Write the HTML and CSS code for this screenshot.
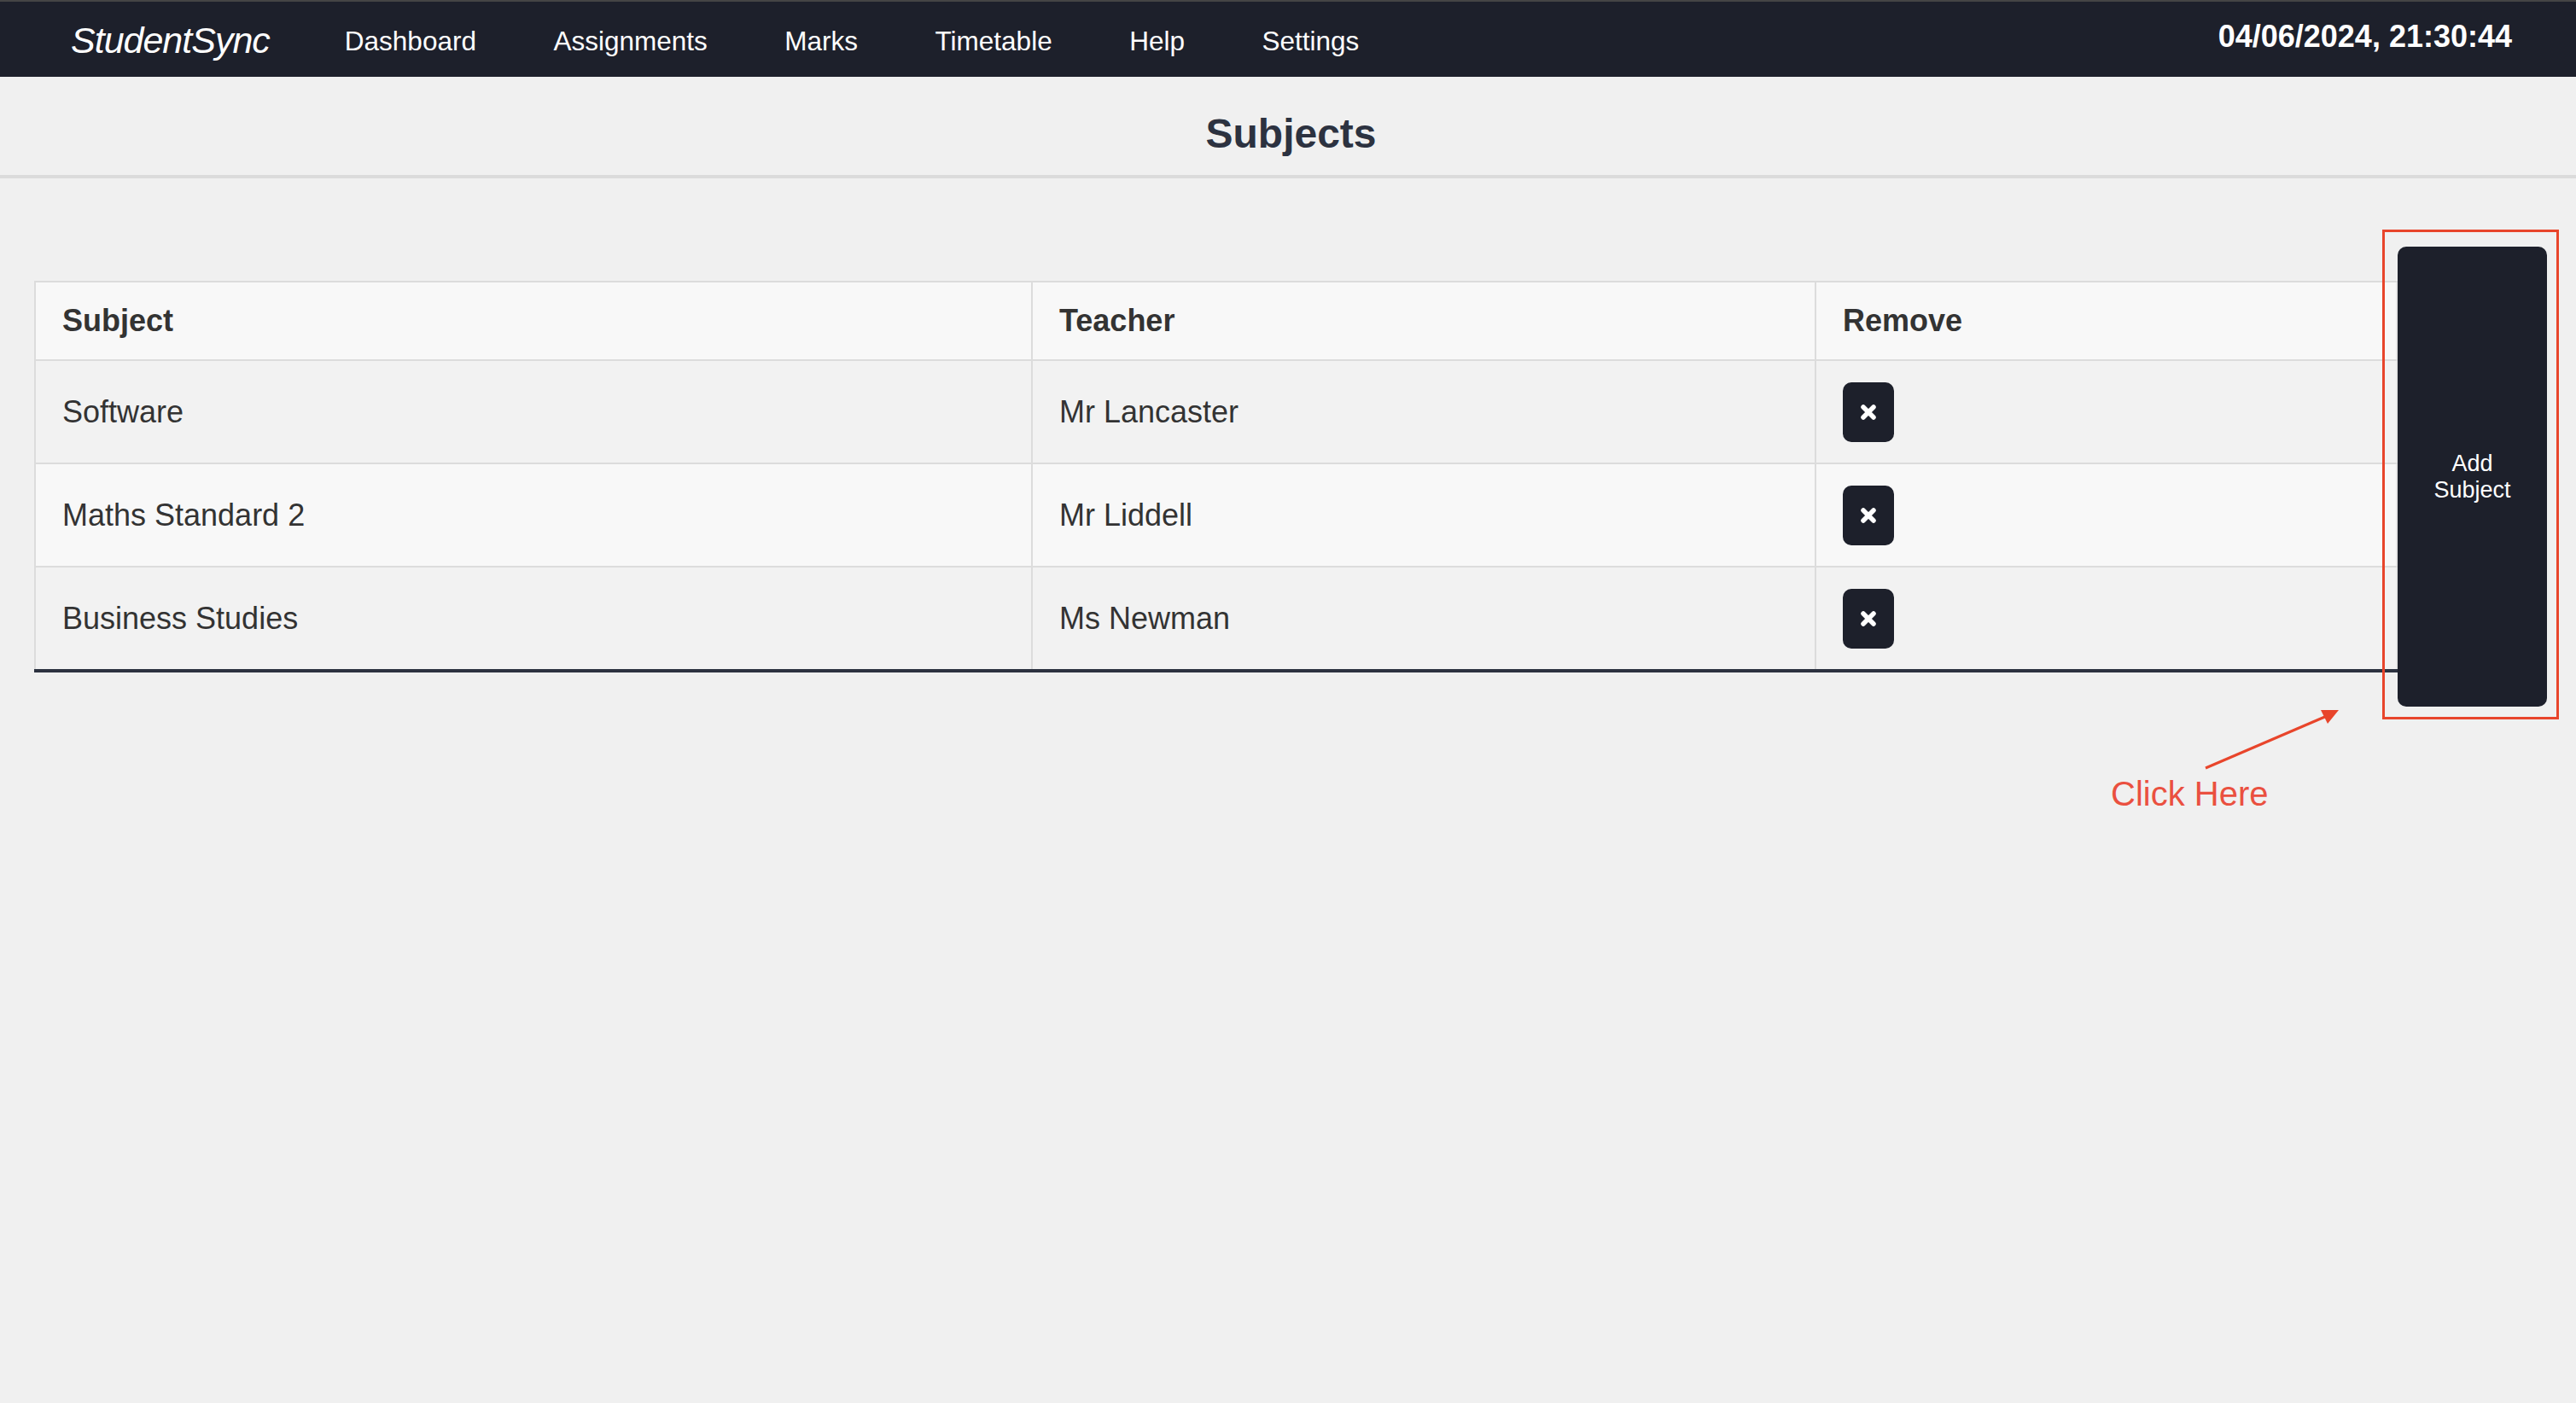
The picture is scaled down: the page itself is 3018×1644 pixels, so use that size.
FILE: index.html
```html
<!DOCTYPE html>
<html lang="en">
<head>
<meta charset="utf-8">
<title>StudentSync - Subjects</title>
<link rel="stylesheet" href="styles.css">
</head>
<body>
<nav class="navbar">
  <a class="brand">StudentSync</a>
  <div class="nav-links">
    <a class="nav-link">Dashboard</a>
    <a class="nav-link">Assignments</a>
    <a class="nav-link">Marks</a>
    <a class="nav-link">Timetable</a>
    <a class="nav-link">Help</a>
    <a class="nav-link">Settings</a>
  </div>
  <div class="clock">04/06/2024, 21:30:44</div>
</nav>
<header class="page-header">
  <h1 class="page-title">Subjects</h1>
</header>
<main class="content">
  <table class="subjects">
    <colgroup>
      <col class="col-subject">
      <col class="col-teacher">
      <col class="col-remove">
    </colgroup>
    <thead>
      <tr><th>Subject</th><th>Teacher</th><th>Remove</th></tr>
    </thead>
    <tbody>
      <tr>
        <td>Software</td><td>Mr Lancaster</td>
        <td><button class="remove-btn" aria-label="Remove"><svg class="x-icon" viewBox="0 0 20 20"><path d="M4 4 L16 16 M16 4 L4 16"/></svg></button></td>
      </tr>
      <tr>
        <td>Maths Standard 2</td><td>Mr Liddell</td>
        <td><button class="remove-btn" aria-label="Remove"><svg class="x-icon" viewBox="0 0 20 20"><path d="M4 4 L16 16 M16 4 L4 16"/></svg></button></td>
      </tr>
      <tr>
        <td>Business Studies</td><td>Ms Newman</td>
        <td><button class="remove-btn" aria-label="Remove"><svg class="x-icon" viewBox="0 0 20 20"><path d="M4 4 L16 16 M16 4 L4 16"/></svg></button></td>
      </tr>
    </tbody>
  </table>
  <button class="add-btn">Add<br>Subject</button>
</main>
<div class="annot-box"></div>
<svg class="annot-arrow" width="180" height="90" viewBox="0 0 180 90">
  <line x1="4" y1="84" x2="146" y2="23" />
  <polygon points="160,16 139,16 147,32" />
</svg>
<div class="annot-text">Click Here</div>
</body>
</html>
```
FILE: styles.css
```css
html, body {
  margin: 0;
  padding: 0;
}
body {
  background: #f0f0f0;
  font-family: "Liberation Sans", Arial, Helvetica, sans-serif;
  color: #333333;
  width: 3018px;
  min-height: 1644px;
  position: relative;
}
.navbar {
  display: flex;
  align-items: center;
  height: 88px;
  border-top: 2px solid #454545;
  background: #1d202b;
  padding: 0 75px 0 83px;
  color: #ffffff;
}
.brand {
  font-size: 43px;
  font-style: italic;
  letter-spacing: -1px;
  line-height: 43px;
  margin-top: 2px;
  margin-right: 88px;
}
.nav-links {
  display: flex;
  gap: 90.5px;
  flex: 1;
}
.nav-link {
  font-size: 31.5px;
  line-height: 31.5px;
  margin-top: 6px;
}
.clock {
  font-size: 36px;
  font-weight: bold;
  line-height: 36px;
  margin-bottom: 7px;
}
.page-header {
  padding: 43px 0 24px 7px;
  border-bottom: 4px solid #dbdbdb;
  text-align: center;
}
.page-title {
  margin: 0;
  font-size: 48px;
  line-height: 48px;
  font-weight: bold;
  color: #2c3240;
}
.content {
  display: flex;
  align-items: flex-start;
  padding: 80px 34px 0 40px;
}
.subjects {
  flex: 1;
  margin-top: 40px;
  border-collapse: collapse;
  table-layout: fixed;
  border-left: 2px solid #dcdcdc;
  border-top: 2px solid #dcdcdc;
  border-right: 2px solid #e6e6e6;
  border-bottom: 4px solid #2c3240;
  font-size: 36px;
}
.col-subject { width: 1168px; }
.col-teacher { width: 918px; }
.subjects th,
.subjects td {
  text-align: left;
  padding: 0 31px;
  border-left: 2px solid #dcdcdc;
  border-top: 2px solid #dcdcdc;
  color: #333333;
}
.subjects th {
  height: 90px;
  font-weight: bold;
  background: #f8f8f8;
}
.subjects td {
  height: 119px;
  font-weight: normal;
}
.subjects tbody tr:nth-child(odd) td { background: #f2f2f2; }
.subjects tbody tr:nth-child(even) td { background: #f8f8f8; }
.remove-btn {
  display: flex;
  align-items: center;
  justify-content: center;
  width: 60px;
  height: 70px;
  padding: 0;
  border: none;
  border-radius: 10px;
  background: #1d202b;
}
.x-icon {
  width: 20px;
  height: 20px;
}
.x-icon path {
  stroke: #ffffff;
  stroke-width: 5.5;
  stroke-linecap: round;
  fill: none;
}
.add-btn {
  width: 175px;
  height: 539px;
  border: none;
  border-radius: 10px;
  background: #1d202b;
  color: #ffffff;
  font-family: "Liberation Sans", Arial, Helvetica, sans-serif;
  font-size: 27px;
  line-height: 31px;
  padding: 0;
}
.annot-box {
  position: absolute;
  left: 2791px;
  top: 269px;
  width: 201px;
  height: 568px;
  border: 3px solid #e8452b;
}
.annot-arrow {
  position: absolute;
  left: 2580px;
  top: 816px;
}
.annot-arrow line {
  stroke: #e8452b;
  stroke-width: 3;
}
.annot-arrow polygon {
  fill: #e8452b;
}
.annot-text {
  position: absolute;
  left: 2473px;
  top: 910px;
  font-size: 40px;
  line-height: 40px;
  color: #ea5040;
}
```
